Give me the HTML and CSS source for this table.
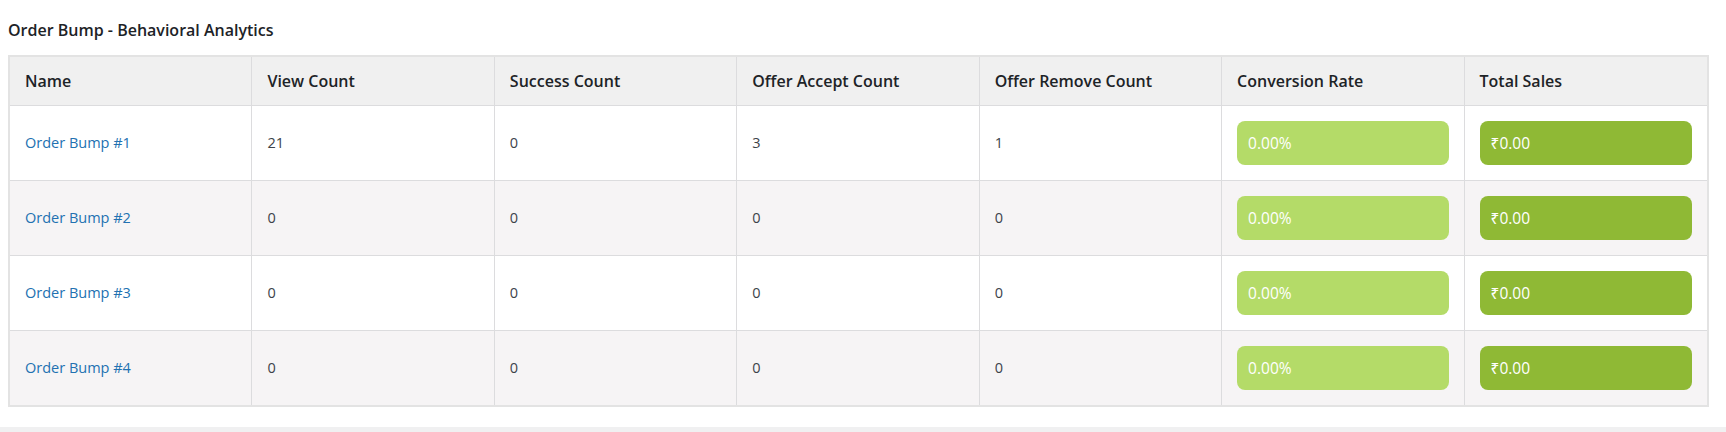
FILE: index.html
```html
<!DOCTYPE html>
<html lang="en">
<head>
<meta charset="utf-8">
<title>Order Bump - Behavioral Analytics</title>
<link rel="stylesheet" href="styles.css">
</head>
<body>
<div class="panel">
  <h2 class="title">Order Bump - Behavioral Analytics</h2>
  <table class="stats">
    <thead>
      <tr>
        <th>Name</th>
        <th>View Count</th>
        <th>Success Count</th>
        <th>Offer Accept Count</th>
        <th>Offer Remove Count</th>
        <th>Conversion Rate</th>
        <th>Total Sales</th>
      </tr>
    </thead>
    <tbody>
      <tr>
        <td><a href="#" class="bump-link">Order Bump #1</a></td>
        <td>21</td>
        <td>0</td>
        <td>3</td>
        <td>1</td>
        <td><span class="badge badge-rate">0.00%</span></td>
        <td><span class="badge badge-sales">₹0.00</span></td>
      </tr>
      <tr>
        <td><a href="#" class="bump-link">Order Bump #2</a></td>
        <td>0</td>
        <td>0</td>
        <td>0</td>
        <td>0</td>
        <td><span class="badge badge-rate">0.00%</span></td>
        <td><span class="badge badge-sales">₹0.00</span></td>
      </tr>
      <tr>
        <td><a href="#" class="bump-link">Order Bump #3</a></td>
        <td>0</td>
        <td>0</td>
        <td>0</td>
        <td>0</td>
        <td><span class="badge badge-rate">0.00%</span></td>
        <td><span class="badge badge-sales">₹0.00</span></td>
      </tr>
      <tr>
        <td><a href="#" class="bump-link">Order Bump #4</a></td>
        <td>0</td>
        <td>0</td>
        <td>0</td>
        <td>0</td>
        <td><span class="badge badge-rate">0.00%</span></td>
        <td><span class="badge badge-sales">₹0.00</span></td>
      </tr>
    </tbody>
  </table>
</div>
<div class="admin-bg"></div>
</body>
</html>
```
FILE: styles.css
```css
html, body {
  margin: 0;
  padding: 0;
  background: #ffffff;
}

body {
  font-family: "Open Sans", "Noto Sans", "Liberation Sans", sans-serif;
  color: #3c434a;
}

.panel {
  padding: 0 17px 20px 8px;
}

.title {
  margin: 0;
  padding-top: 20px;
  height: 35px;
  font-size: 16px;
  line-height: 20px;
  font-weight: 600;
  color: #1d2327;
}

.stats {
  width: 1701px;
  table-layout: fixed;
  border-collapse: separate;
  border-spacing: 0;
  border: 2px solid #e3e3e3;
  font-size: 14.5px;
}

.stats th,
.stats td {
  padding: 15px;
  text-align: left;
  vertical-align: middle;
  border-right: 1px solid #dcdcde;
  border-bottom: 1px solid #dcdcde;
}

.stats th:last-child,
.stats td:last-child {
  border-right: none;
}

.stats tbody tr:last-child td {
  border-bottom: none;
}

.stats th {
  height: 18px;
  line-height: 18px;
  font-size: 16px;
  font-weight: 600;
  color: #1d2327;
  background: #f0f0f0;
}

.stats td {
  height: 44px;
  line-height: 20px;
  color: #3c434a;
  background: #ffffff;
}

.stats tbody tr:nth-child(even) td {
  background: #f6f4f5;
}

.bump-link {
  color: #2271b1;
  text-decoration: none;
}

.badge {
  display: block;
  height: 44px;
  line-height: 44px;
  padding: 0 11px;
  border-radius: 8px;
  color: #ffffff;
  font-size: 15.5px;
}

.badge-rate {
  background: #b4db68;
}

.badge-sales {
  background: #8fb935;
}

.admin-bg {
  height: 5px;
  background: #f0f0f1;
}
```
